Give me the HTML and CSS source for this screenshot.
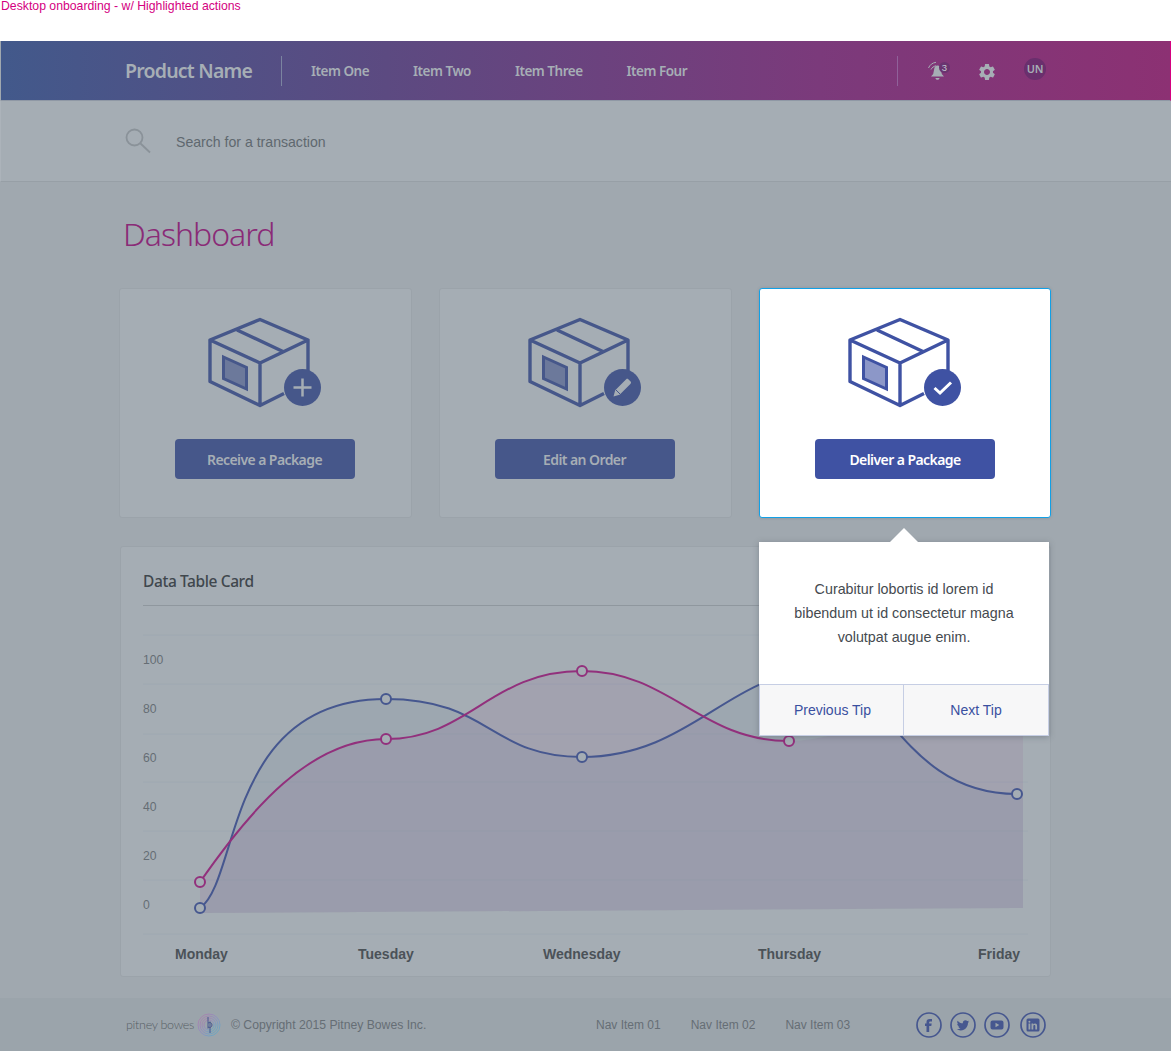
FILE: index.html
```html
<!DOCTYPE html>
<html lang="en">
<head>
<meta charset="utf-8">
<title>Desktop onboarding</title>
<link rel="stylesheet" href="styles.css">
</head>
<body>
<svg class="defs" width="0" height="0" aria-hidden="true">
  <symbol id="box" viewBox="205 315 120 95">
    <path class="box-window" d="M223.500 357l23 10.500v21.500l-23-10.500z"/>
    <path class="box-line" d="M260 319.500l48 20.500-48 23-50-23zM210 340v41.500l50 24 24-12M260 363v42.500M308 340v32M237 330l47 22"/>
  </symbol>
</svg>

<div class="caption">Desktop onboarding - w/ Highlighted actions</div>

<header class="topbar">
  <div class="brand">Product Name</div>
  <nav class="topnav">
    <a>Item One</a><a>Item Two</a><a>Item Three</a><a>Item Four</a>
  </nav>
  <div class="tools">
    <span class="tool tool-bell">
      <svg width="24" height="24" viewBox="0 0 24 24"><path class="ico-fill" d="M12.500 6.500c-2 0-3 1.500-3.300 3.500l-1 5-2.200 2.500h13l-2.200-2.500-1-5c-.3-2-1.300-3.500-3.300-3.500zM10.500 19h4c0 1-.9 1.800-2 1.800s-2-.8-2-1.800z"/><path class="ico-wave" d="M3.500 9C4.800 5.800 7.500 3.800 11 3.300M6 10.500C7 8.500 8.700 7.300 11 6.800"/></svg>
      <span class="bell-count">3</span>
    </span>
    <span class="tool tool-gear">
      <svg width="20" height="20" viewBox="0 0 24 24"><path class="ico-fill" d="M19.140 12.940c.04-.3.06-.61.06-.94 0-.32-.02-.64-.07-.94l2.030-1.580c.18-.14.23-.41.12-.61l-1.920-3.320c-.12-.22-.37-.29-.59-.22l-2.390.96c-.5-.38-1.030-.7-1.620-.94l-.36-2.540c-.04-.24-.24-.41-.48-.41h-3.840c-.24 0-.43.17-.47.41l-.36 2.540c-.59.24-1.130.57-1.620.94l-2.390-.96c-.22-.08-.47 0-.59.22L2.740 8.870c-.12.21-.08.47.12.61l2.030 1.580c-.05.3-.09.63-.09.94s.02.64.07.94l-2.030 1.580c-.18.14-.23.41-.12.61l1.920 3.320c.12.22.37.29.59.22l2.390-.96c.5.38 1.030.7 1.620.94l.36 2.540c.05.24.24.41.48.41h3.840c.24 0 .44-.17.47-.41l.36-2.540c.59-.24 1.130-.56 1.620-.94l2.390.96c.22.08.47 0 .59-.22l1.920-3.320c.12-.22.07-.47-.12-.61l-2.010-1.580zM12 15.600c-1.980 0-3.600-1.620-3.600-3.600s1.620-3.600 3.600-3.600 3.600 1.620 3.600 3.600-1.620 3.600-3.600 3.600z"/></svg>
    </span>
    <span class="avatar">UN</span>
  </div>
</header>

<section class="searchbar">
  <svg class="search-ico" width="26" height="26" viewBox="0 0 26 26"><circle cx="9.500" cy="9.500" r="8"/><path d="M15.500 15.500l9.500 9"/></svg>
  <span class="search-text">Search for a transaction</span>
</section>

<main class="main">
  <h1 class="title">Dashboard</h1>

  <div class="actions">
    <article class="action">
      <div class="pack">
        <svg class="pack-box" width="120" height="95"><use href="#box"/></svg>
        <svg class="pack-badge" width="37" height="37" viewBox="0 0 37 37"><circle class="badge-bg" cx="18.500" cy="18.500" r="18.500"/><path class="badge-mark" d="M18.500 9.500v18M9.500 18.500h18"/></svg>
      </div>
      <button class="btn">Receive a Package</button>
    </article>
    <article class="action">
      <div class="pack">
        <svg class="pack-box" width="120" height="95"><use href="#box"/></svg>
        <svg class="pack-badge" width="37" height="37" viewBox="0 0 37 37"><circle class="badge-bg" cx="18.500" cy="18.500" r="18.500"/><path class="badge-solid" d="M9.500 27.500l1.700-6.200 11-11c.6-.6 1.500-.6 2.100 0l2.300 2.300c.6.6.6 1.500 0 2.100l-11 11z"/><path class="badge-cut" d="M12 21l4.500 4.500"/></svg>
      </div>
      <button class="btn">Edit an Order</button>
    </article>
    <article class="action action-on">
      <div class="pack">
        <svg class="pack-box" width="120" height="95"><use href="#box"/></svg>
        <svg class="pack-badge" width="37" height="37" viewBox="0 0 37 37"><circle class="badge-bg" cx="18.500" cy="18.500" r="18.500"/><path class="badge-mark" d="M10.500 19l5.500 5 11-10.500"/></svg>
      </div>
      <button class="btn">Deliver a Package</button>

      <aside class="tip">
        <p class="tip-text">Curabitur lobortis id lorem id<br>bibendum ut id consectetur magna<br>volutpat augue enim.</p>
        <div class="tip-actions">
          <a class="tip-btn">Previous Tip</a>
          <a class="tip-btn">Next Tip</a>
        </div>
      </aside>
    </article>
  </div>

  <section class="datacard">
    <h2 class="datacard-title">Data Table Card</h2>
    <svg class="chart" width="929" height="370" viewBox="121 606 929 370">
      <g class="grid">
        <path d="M143 635H1028M143 684H1028M143 734H1028M143 782H1028M143 831H1028M143 880H1028M143 934H1028"/>
      </g>
      <g class="y-labels">
        <text x="143" y="664">100</text>
        <text x="143" y="713">80</text>
        <text x="143" y="762">60</text>
        <text x="143" y="811">40</text>
        <text x="143" y="860">20</text>
        <text x="143" y="909">0</text>
      </g>
      <path class="area-blue" d="M200 908C240 880 225 699 386 699C490 699 490 757 582 757C690 757 730 672 815 672C885 672 900 794 1017 794L1023 794V908L200 913Z"/>
      <path class="area-pink" d="M200 882C250 810 310 739 386 739C470 739 490 671 582 671C670 671 700 741 789 741C850 741 950 690 1023 680V908L200 913Z"/>
      <path class="line-blue" d="M200 908C240 880 225 699 386 699C490 699 490 757 582 757C690 757 730 672 815 672C885 672 900 794 1017 794"/>
      <path class="line-pink" d="M200 882C250 810 310 739 386 739C470 739 490 671 582 671C670 671 700 741 789 741"/>
      <g class="dots-blue">
        <circle cx="200" cy="908" r="5"/><circle cx="386" cy="699" r="5"/><circle cx="582" cy="757" r="5"/><circle cx="1017" cy="794" r="5"/>
      </g>
      <g class="dots-pink">
        <circle cx="200" cy="882" r="5"/><circle cx="386" cy="739" r="5"/><circle cx="582" cy="671" r="5"/><circle cx="789" cy="741" r="5"/>
      </g>
      <g class="x-labels">
        <text x="175" y="959">Monday</text>
        <text x="358" y="959">Tuesday</text>
        <text x="543" y="959">Wednesday</text>
        <text x="758" y="959">Thursday</text>
        <text x="978" y="959">Friday</text>
      </g>
    </svg>
  </section>
</main>

<footer class="footer">
  <div class="legal">
    <span class="wordmark">pitney bowes</span>
    <svg class="logo" width="24" height="24" viewBox="0 0 24 24">
      <defs><linearGradient id="logoGrad" x1="0" y1="0" x2="1" y2="1"><stop offset="0" stop-color="#b07fa5"/><stop offset=".5" stop-color="#8f8fc0"/><stop offset="1" stop-color="#5fb0c0"/></linearGradient></defs>
      <g class="logo-rings"><circle cx="12" cy="12" r="11"/><circle cx="12" cy="12" r="9"/><circle cx="12" cy="12" r="7"/><circle cx="12" cy="12" r="5"/></g>
      <path class="logo-mark" d="M11 4v11.500M13 8.500V20M11 10c1.500-1 4-.5 4 2s-2.500 3-4 2"/>
    </svg>
    <span class="copyright">© Copyright 2015 Pitney Bowes Inc.</span>
  </div>
  <nav class="footnav"><a>Nav Item 01</a><a>Nav Item 02</a><a>Nav Item 03</a></nav>
  <div class="social">
    <svg width="26" height="26" viewBox="0 0 26 26"><circle class="soc-ring" cx="13" cy="13" r="12"/><path class="soc-fill" d="M14 9.500h2V7h-2.200C11.500 7 10.500 8.300 10.500 10v1.500H9v2.400h1.500V20h2.700v-6.100h2.100l.4-2.400h-2.500v-1.200c0-.4.3-.8.8-.8z"/></svg>
    <svg width="26" height="26" viewBox="0 0 26 26"><circle class="soc-ring" cx="13" cy="13" r="12"/><path class="soc-fill" transform="translate(5.800 5.800) scale(.6)" d="M22.460 6c-.77.35-1.600.58-2.460.69.88-.53 1.560-1.370 1.880-2.380-.83.5-1.750.85-2.720 1.050C18.370 4.500 17.260 4 16 4c-2.350 0-4.270 1.920-4.270 4.290 0 .34.04.67.11.98C8.280 9.090 5.110 7.380 3 4.790c-.37.63-.58 1.370-.58 2.150 0 1.490.75 2.810 1.910 3.560-.71 0-1.370-.2-1.950-.5v.03c0 2.080 1.480 3.820 3.440 4.210a4.220 4.220 0 0 1-1.930.07 4.280 4.280 0 0 0 4 2.980 8.521 8.521 0 0 1-5.330 1.840c-.34 0-.68-.02-1.020-.06C3.440 20.290 5.700 21 8.120 21 16 21 20.330 14.460 20.330 8.790c0-.19 0-.37-.01-.56.84-.6 1.560-1.360 2.140-2.230z"/></svg>
    <svg width="26" height="26" viewBox="0 0 26 26"><circle class="soc-ring" cx="13" cy="13" r="12"/><path class="soc-fill" fill-rule="evenodd" d="M8.500 8.500h9a2 2 0 0 1 2 2v5a2 2 0 0 1-2 2h-9a2 2 0 0 1-2-2v-5a2 2 0 0 1 2-2zM11.500 10.800v4.400l3.800-2.200z"/></svg>
    <svg class="soc-last" width="26" height="26" viewBox="0 0 26 26"><circle class="soc-ring" cx="13" cy="13" r="12"/><path class="soc-fill" fill-rule="evenodd" d="M8 6.500h10A1.500 1.500 0 0 1 19.500 8v10a1.500 1.500 0 0 1-1.500 1.500H8A1.500 1.500 0 0 1 6.500 18V8A1.500 1.500 0 0 1 8 6.500zM8.500 11.500V17.500h1.800v-6zM9.400 8.700a1 1 0 1 0 0 2 1 1 0 0 0 0-2zM11.500 11.500v6h1.800v-3.200c0-1.700 2-1.800 2-.2v3.400h1.800v-3.800c0-2.700-2.800-2.700-3.800-1.300v-.9z"/></svg>
  </div>
</footer>
</body>
</html>
```

FILE: styles.css
```css
* { box-sizing: border-box; }
html, body { margin: 0; padding: 0; }
body {
  width: 1171px;
  background: #a0a8af;
  font-family: "Liberation Sans", Arial, sans-serif;
  overflow-x: hidden;
}
.defs { position: absolute; }
a { cursor: pointer; }

.caption {
  height: 41px;
  background: #fff;
  color: #d4007f;
  font-size: 12.250px;
  line-height: 13px;
  padding-left: 1px;
}

/* top bar */
.topbar {
  height: 60px;
  margin-left: 1px;
  padding-left: 124px;
  display: flex;
  align-items: center;
  background: linear-gradient(90deg, #42598b 0%, #5c4a81 33%, #7b3a7b 70%, #8c3173 100%);
  border-bottom: 1px solid #8f98a5;
  border-right: 1px solid #d4007f;
  color: #a6aeb5;
  font-family: "Noto Sans", sans-serif;
}
.brand {
  width: 157px;
  height: 30px;
  border-right: 1px solid #7b84a0;
  font-size: 19.500px;
  font-weight: 600;
  line-height: 30px;
  letter-spacing: -.78px;
}
.topnav {
  display: flex;
  gap: 44px;
  margin-left: 29px;
  font-size: 13.500px;
  font-weight: 600;
  letter-spacing: -.49px;
}
.tools {
  display: flex;
  align-items: center;
  margin-left: auto;
  margin-right: 124px;
  height: 30px;
  border-left: 1px solid #90619a;
  padding-left: 27px;
}
.tool { display: block; position: relative; line-height: 0; }
.tool-bell { width: 24px; height: 24px; margin-right: 28px; }
.tool-gear { width: 20px; height: 20px; margin-right: 27px; margin-top: 3px; }
.ico-fill { fill: #a6aeb5; }
.ico-wave { fill: none; stroke: #a6aeb5; stroke-width: 1; }
.bell-count {
  position: absolute;
  left: 14px;
  top: 3px;
  width: 11px;
  height: 11px;
  border-radius: 50%;
  background: #6a3470;
  color: #c4c8d0;
  font: 9.500px/11px "Liberation Sans", sans-serif;
  text-align: center;
}
.avatar {
  width: 22px;
  height: 22px;
  margin-top: -3px;
  border-radius: 50%;
  background: #6a2f6d;
  color: #a6aeb5;
  font-size: 11px;
  font-weight: 600;
  letter-spacing: -.3px;
  line-height: 22px;
  text-align: center;
}

/* search */
.searchbar {
  height: 81px;
  padding-left: 124px;
  display: flex;
  align-items: center;
  background: #a5adb4;
  border-bottom: 1px solid #979fa6;
  border-left: 1px solid #acb3ba;
}
.search-ico { fill: none; stroke: #8a9299; stroke-width: 1.800; }
.search-text { margin: 2px 0 0 25px; font-size: 14.100px; color: #5f686f; }

/* main */
.main { padding: 0 120px 0 119px; height: 816px; }
.title {
  margin: 0;
  padding: 34px 0 0 4px;
  height: 106px;
  color: #8a2b77;
  font-family: "Noto Sans", sans-serif;
  font-size: 32px;
  font-weight: 300;
  line-height: 36px;
  letter-spacing: -1px;
}
.actions {
  display: grid;
  grid-template-columns: 293px 293px 292px;
  gap: 27px;
}
.action {
  position: relative;
  height: 230px;
  padding: 26px 2px 0 0;
  display: flex;
  flex-direction: column;
  align-items: center;
  background: #a5adb4;
  border: 1px solid #9ba3aa;
  border-radius: 3px;
  color: #46578a;
}
.pack { position: relative; width: 120px; height: 95px; line-height: 0; }
.pack-badge { position: absolute; left: 79px; top: 54px; }
.box-line { fill: none; stroke: currentColor; stroke-width: 3.400; stroke-linejoin: round; }
.box-window { fill: currentColor; fill-opacity: .6; stroke: currentColor; stroke-width: 3; }
.badge-bg { fill: currentColor; }
.badge-mark { fill: none; stroke: #a5adb4; stroke-width: 2.500; }
.badge-solid { fill: #a5adb4; }
.badge-cut { fill: none; stroke: #46578a; stroke-width: 1; }
.btn {
  width: 180px;
  height: 40px;
  margin-top: 29px;
  padding: 0;
  border: 0;
  border-radius: 4px;
  background: #46578a;
  color: #a6aeb5;
  font-family: "Noto Sans", sans-serif;
  font-size: 14px;
  font-weight: 600;
  letter-spacing: -.58px;
}
.action-on {
  padding-right: 0;
  background: #fff;
  border-color: #12a0e6;
  color: #3f52a3;
  box-shadow: 0 0 3px rgba(60, 70, 80, .2);
}
.action-on .btn { background: #3f52a3; color: #fff; }
.action-on .badge-mark { stroke: #fff; stroke-width: 3; }

/* tip */
.tip {
  position: absolute;
  left: -1px;
  top: 253px;
  width: 290px;
  height: 194px;
  z-index: 2;
  background: #fff;
  box-shadow: 0 1px 6px rgba(60, 70, 80, .35);
  display: flex;
  flex-direction: column;
}
.tip::before {
  content: "";
  position: absolute;
  left: 131px;
  top: -14px;
  width: 28px;
  height: 14px;
  background: #fff;
  clip-path: polygon(50% 0, 100% 100%, 0 100%);
}
.tip-text {
  flex: 1;
  margin: 0;
  padding-top: 35px;
  color: #454a4f;
  font-size: 14.300px;
  line-height: 24px;
  text-align: center;
}
.tip-actions {
  height: 52px;
  display: flex;
  background: #f7f7f8;
  border: 1px solid #c6cee4;
}
.tip-btn {
  flex: 1;
  display: flex;
  align-items: center;
  justify-content: center;
  color: #3a50a0;
  font-size: 14px;
}
.tip-btn:first-child { flex: 0 0 143px; padding-left: 2px; }
.tip-btn + .tip-btn { border-left: 1px solid #c6cee4; }

/* data card */
.datacard {
  width: 931px;
  height: 431px;
  margin: 28px 0 0 1px;
  background: #a5adb4;
  border: 1px solid #9ba3aa;
  border-radius: 3px;
}
.datacard-title {
  height: 59px;
  margin: 0 22px;
  border-bottom: 1px solid #8f979e;
  color: #40474d;
  font-family: "Noto Sans", sans-serif;
  font-size: 15.500px;
  font-weight: 500;
  letter-spacing: -.4px;
  line-height: 68px;
}
.chart { display: block; }
.grid path { fill: none; stroke: #9ea8b1; stroke-width: 1; }
.y-labels text { fill: #656d74; font-size: 12.200px; }
.x-labels text { fill: #4b5258; font-size: 14px; font-weight: 700; }
.area-blue { fill: #3f6083; fill-opacity: .07; }
.area-pink { fill: #7f2a7c; fill-opacity: .08; }
.line-blue { fill: none; stroke: #46578f; stroke-width: 2; }
.line-pink { fill: none; stroke: #92307c; stroke-width: 2; }
.dots-blue circle { fill: #a5adb4; stroke: #46578f; stroke-width: 2; }
.dots-pink circle { fill: #a5adb4; stroke: #92307c; stroke-width: 2; }

/* footer */
.footer {
  height: 53px;
  padding-left: 126px;
  display: flex;
  align-items: center;
  background: #9ba4ab;
  color: #666e75;
  font-size: 12px;
}
.legal { display: flex; align-items: center; width: 470px; }
.wordmark {
  width: 70px;
  font-family: "Lato", sans-serif;
  font-size: 12.500px;
  font-weight: 300;
  letter-spacing: -.3px;
  color: #565e65;
  white-space: nowrap;
}
.logo { margin: 0 0 0 1px; }
.logo-rings circle { fill: none; stroke: url(#logoGrad); stroke-width: 1; }
.logo-mark { fill: none; stroke: #46578f; stroke-width: 1; }
.copyright { margin-left: 10px; font-size: 12.200px; white-space: nowrap; }
.footnav { display: flex; gap: 30px; }
.social { display: flex; margin-left: 66px; gap: 8px; }
.soc-last { margin-left: 2px; }
.soc-ring { fill: none; stroke: #46578f; stroke-width: 1.700; }
.soc-fill { fill: #46578f; }
```
